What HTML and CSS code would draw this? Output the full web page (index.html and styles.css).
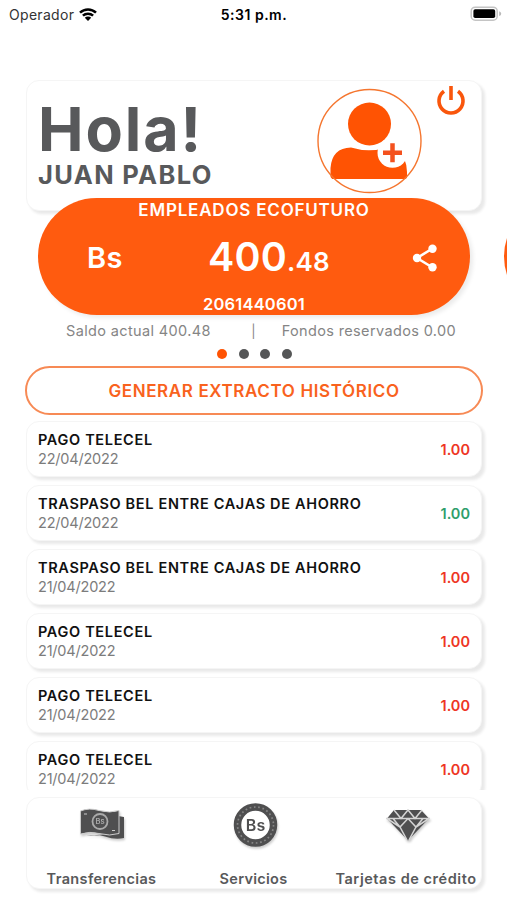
FILE: index.html
```html
<!DOCTYPE html>
<html lang="es">
<head>
  <meta charset="UTF-8">
  <meta name="viewport" content="width=device-width, initial-scale=1">
  <title>Inicio</title>
  <link rel="stylesheet" href="styles.css">
</head>
<body>
  <div class="status-bar">
    <div class="carrier">
      <span>Operador</span>
      <svg width="20" height="15" viewBox="0 0 20 15">
        <path d="M2 5.6a11.6 11.6 0 0 1 16 0M4.9 8.7a7.4 7.4 0 0 1 10.2 0" fill="none" stroke="#000" stroke-width="2.5"/>
        <path d="M6.8 10.8a4.6 4.6 0 0 1 6.4 0L10 14z"/>
      </svg>
    </div>
    <div class="time">5:31 p.m.</div>
    <svg class="battery" width="32" height="16" viewBox="0 0 32 16">
      <rect x="1.2" y="1.2" width="26" height="13" rx="4" fill="#fff" stroke="#c4c4c4" stroke-width="1.5"/>
      <rect x="3.4" y="3.3" width="21.8" height="8.8" rx="1.8"/>
      <path d="M29.2 5.3q2 .6 2 2.4t-2 2.4z" fill="#b9b9b9"/>
    </svg>
  </div>

  <main>
    <section class="card greeting">
      <div class="hello">
        <h1>Hola!</h1>
        <h2>JUAN PABLO</h2>
      </div>
      <svg class="avatar" width="106" height="106" viewBox="0 0 106 106">
        <path d="M14.5 91V80Q16 60 35 59.5Q53 65 71 59.5Q84 61 88 70Q91 77 91 84V91z" fill="#ff5303"/>
        <path d="M10 84L19 94H13zM96 84L87 94H93z" fill="#fff"/>
        <circle cx="53.5" cy="36" r="21.5" fill="#ff5303"/>
        <circle cx="76.5" cy="64.8" r="15" fill="#fff"/>
        <path d="M67 64.8h19M76.5 55.3v19" stroke="#f4511e" stroke-width="4.5"/>
        <circle cx="53.5" cy="53" r="51.5" fill="none" stroke="#f5762f" stroke-width="1.4"/>
      </svg>
      <svg class="power" width="30" height="32" viewBox="0 0 30 32">
        <path d="M8 7.2A12 12 0 1 0 22 7.2M15 2V16" fill="none" stroke="#f9560c" stroke-width="3.6"/>
      </svg>
    </section>

    <section class="accounts">
      <div class="account">
        <div class="account-name">EMPLEADOS ECOFUTURO</div>
        <div class="account-row">
          <span class="currency">Bs</span>
          <span class="amount">400<small>.48</small></span>
          <svg width="26" height="28" viewBox="0 0 26 28" fill="#fff">
            <path d="M20.5 4.5L5 14L20.5 23.5" fill="none" stroke="#fff" stroke-width="2.6"/>
            <circle cx="20.5" cy="4.8" r="4.2"/>
            <circle cx="5" cy="14" r="4.2"/>
            <circle cx="20.5" cy="23.2" r="4.2"/>
          </svg>
        </div>
        <div class="account-number">2061440601</div>
      </div>
      <div class="account"></div>
    </section>

    <div class="balance">
      <span>Saldo actual 400.48</span>
      <span class="divider">|</span>
      <span>Fondos reservados 0.00</span>
    </div>

    <div class="dots">
      <i class="active"></i><i></i><i></i><i></i>
    </div>

    <button class="statement">GENERAR EXTRACTO HISTÓRICO</button>

    <section class="movements">
      <div class="card movement">
        <div><h3>PAGO TELECEL</h3><p>22/04/2022</p></div>
        <span class="debit">1.00</span>
      </div>
      <div class="card movement">
        <div><h3>TRASPASO BEL ENTRE CAJAS DE AHORRO</h3><p>22/04/2022</p></div>
        <span class="credit">1.00</span>
      </div>
      <div class="card movement">
        <div><h3>TRASPASO BEL ENTRE CAJAS DE AHORRO</h3><p>21/04/2022</p></div>
        <span class="debit">1.00</span>
      </div>
      <div class="card movement">
        <div><h3>PAGO TELECEL</h3><p>21/04/2022</p></div>
        <span class="debit">1.00</span>
      </div>
      <div class="card movement">
        <div><h3>PAGO TELECEL</h3><p>21/04/2022</p></div>
        <span class="debit">1.00</span>
      </div>
      <div class="card movement">
        <div><h3>PAGO TELECEL</h3><p>21/04/2022</p></div>
        <span class="debit">1.00</span>
      </div>
    </section>
  </main>

  <nav class="card">
    <a class="tab transfers">
      <svg width="50" height="50" viewBox="0 0 50 50">
        <path d="M9.5 34Q19 32 28 34.5Q38 38 47 36V15L41 14V31z" fill="#4f4f50"/>
        <path d="M3.5 9Q12 5.500 22 8.5Q33 11.5 42 8.5V31.5Q33 34.5 22 31.5Q13 29 3.5 32z" fill="#4f4f50" stroke="#ccc" stroke-width="1"/>
        <circle cx="23" cy="19.5" r="7.5" fill="none" stroke="#aaa" stroke-width="1.8"/>
        <text x="23" y="22.3" text-anchor="middle" font-size="7.5" font-weight="600" fill="#aaa">Bs</text>
        <path d="M7 12h3M35 28.5h3" stroke="#ccc" stroke-width="1.2"/>
      </svg>
      <span>Transferencias</span>
    </a>
    <a class="tab services">
      <svg width="50" height="50" viewBox="0 0 50 50">
        <circle cx="26.5" cy="23" r="18" fill="#fff" stroke="#4f4f50" stroke-width="7.5"/>
        <circle cx="26.5" cy="23" r="18" fill="none" stroke="#858585" stroke-width="1.7" stroke-dasharray="1.7 2.65"/>
        <text x="26.5" y="28.7" text-anchor="middle" font-size="16" font-weight="600" fill="#4f4f50">Bs</text>
      </svg>
      <span>Servicios</span>
    </a>
    <a class="tab cards">
      <svg width="50" height="50" viewBox="0 0 50 50">
        <path d="M13 8H40L48 16.5L27 38.5L6 16.5z" fill="#4f4f50"/>
        <path d="M5 16.5H49M13 8L20 16.5L27 8L34 16.5L41 8M12 16.5L19 25L27 16.5L35 25L42 16.5M6 16.5L19 25L26 38M48 16.5L35 25L28 38" fill="none" stroke="#d4d4d4" stroke-width="1.5"/>
      </svg>
      <span>Tarjetas de crédito</span>
    </a>
  </nav>
</body>
</html>
```
FILE: styles.css
```css
* {
  margin: 0;
  padding: 0;
  box-sizing: border-box;
}

body {
  font-family: Inter, 'Open Sans', sans-serif;
  background: #fff;
  color: #58595b;
  height: 900px;
  overflow: hidden;
  display: flex;
  flex-direction: column;
  white-space: nowrap;
}

.status-bar {
  height: 28px;
  padding: 0 5px 0 9px;
  display: grid;
  grid-template-columns: 1fr auto 1fr;
  align-items: center;
  font-size: 14px;
  color: #000;
}

.carrier {
  display: flex;
  align-items: center;
  gap: 4px;
  color: #333;
  letter-spacing: 0.3px;
}

.time {
  font-weight: 600;
  letter-spacing: 0.5px;
  margin-right: 3px;
}

.battery {
  justify-self: end;
}

main {
  height: 762px;
  padding-top: 52px;
  overflow: hidden;
}

.card {
  margin: 0 25px 0 26px;
  background: #fff;
  border: 1px solid #f5f5f5;
  border-radius: 13px;
  box-shadow: 3px 3px 3px rgba(0, 0, 0, 0.09);
}

.greeting {
  height: 131px;
  display: flex;
  align-items: flex-start;
  padding: 7px 15px 0 11px;
}

.hello {
  flex: 1;
}

h1 {
  font-size: 61px;
  line-height: 60px;
  padding-top: 11px;
  font-weight: 700;
  letter-spacing: 1.9px;
}

h2 {
  font-size: 25.5px;
  line-height: 32px;
  font-weight: 700;
  letter-spacing: 1.35px;
}

.avatar {
  margin-right: 14px;
}

.power {
  margin-top: -4px;
}

.accounts {
  display: flex;
  gap: 34px;
  padding-left: 38px;
  margin-top: -13px;
}

.account {
  flex: 0 0 432px;
  height: 117px;
  border-radius: 59px;
  background: #ff5b0f;
  color: #fff;
  text-align: center;
  box-shadow: 3px 3px 4px rgba(0, 0, 0, 0.08);
  display: flex;
  flex-direction: column;
  justify-content: space-between;
}

.account-name {
  font-size: 17px;
  line-height: 24px;
  font-weight: 600;
  letter-spacing: 0.8px;
}

.account-row {
  display: grid;
  grid-template-columns: 134px 1fr 90px;
  align-items: center;
  justify-items: center;
}

.currency {
  font-size: 29px;
  font-weight: 600;
  letter-spacing: 0.5px;
}

.amount {
  font-size: 39.5px;
  line-height: 48px;
  font-weight: 600;
  letter-spacing: 0.2px;
  padding: 3px 14px 0 0;
}

.amount small {
  font-size: 26px;
}

.account-number {
  font-size: 16.5px;
  line-height: 22px;
  font-weight: 600;
  letter-spacing: 0.2px;
}

.balance {
  display: flex;
  justify-content: space-between;
  padding: 0 51px 0 66px;
  margin-top: 4px;
  font-size: 14.5px;
  line-height: 24px;
  letter-spacing: 0.36px;
  color: #858585;
}

.divider {
  margin-left: 15px;
  font-size: 13px;
}

.dots {
  display: flex;
  justify-content: center;
  gap: 11.7px;
  padding: 6px 0 7px 2px;
}

.dots i {
  width: 10px;
  height: 10px;
  border-radius: 50%;
  background: #555657;
}

.dots .active {
  background: #ff5303;
}

.statement {
  display: block;
  width: 458px;
  height: 49px;
  margin-left: 25px;
  border: 2px solid #f78a55;
  border-radius: 25px;
  background: #fff;
  color: #f9621d;
  font: 600 17px Inter, sans-serif;
  letter-spacing: 0.62px;
}

.movements {
  display: flex;
  flex-direction: column;
  gap: 8px;
  margin-top: 6px;
}

.movement {
  flex: 0 0 56px;
  display: flex;
  justify-content: space-between;
  align-items: center;
  padding: 0 11px 0 11px;
}

h3 {
  font-size: 14.5px;
  line-height: 19px;
  font-weight: 600;
  letter-spacing: 0.66px;
  color: #111;
}

.movement p {
  font-size: 14.5px;
  line-height: 19px;
  letter-spacing: -0.2px;
  color: #7c7c7c;
}

.movement span {
  font-size: 14.5px;
  font-weight: 600;
}

.movement .debit {
  color: #ee3524;
}

.movement .credit {
  color: #2e9e6c;
}

nav {
  height: 92px;
  margin-top: 7px !important;
  display: grid;
  grid-template-columns: 149px 155px 150px;
}

.tab {
  height: 90px;
  display: flex;
  flex-direction: column;
  align-items: center;
  justify-content: space-between;
  font-size: 14.5px;
  line-height: 18px;
  font-weight: 600;
}

.tab svg {
  margin-top: 4px;
  letter-spacing: 0;
  filter: drop-shadow(1px 2px 1px rgba(0, 0, 0, 0.2));
}

.transfers {
  letter-spacing: 0.36px;
}

.services {
  letter-spacing: 0.27px;
}

.cards {
  letter-spacing: 0.55px;
}
```
